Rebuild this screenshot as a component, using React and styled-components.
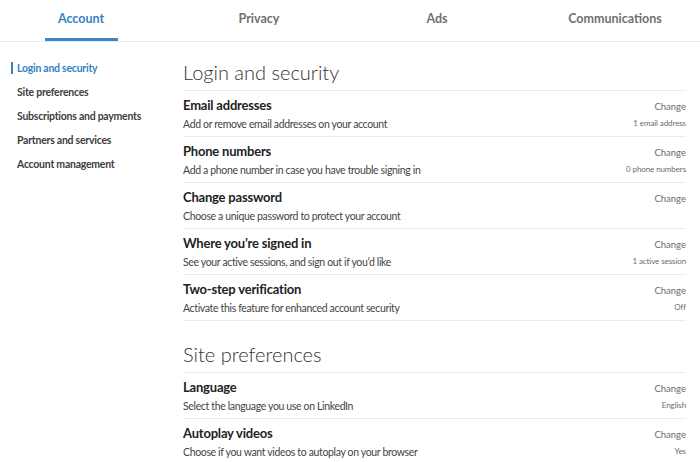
import React from "react";
import styled, { createGlobalStyle } from "styled-components";

const Global = createGlobalStyle`
  html, body { margin: 0; padding: 0; background: #fff; }
  body {
    font-family: Lato, "Open Sans", "Liberation Sans", sans-serif;
    color: #333;
    -webkit-font-smoothing: antialiased;
  }
  * { box-sizing: border-box; }
`;

const Page = styled.div`
  width: 700px;
  height: 462px;
  overflow: hidden;
  background: #fff;
`;

const TabBar = styled.nav`
  display: grid;
  grid-template-columns: repeat(4, 178px);
  margin-left: -8px;
  height: 42px;
  border-bottom: 1px solid #e9ebed;
`;

const Tab = styled.div`
  display: flex;
  flex-direction: column;
  align-items: center;
  height: 41px;
  padding-top: 10px;
  font-size: 12.5px;
  font-weight: 700;
  line-height: 17px;
  color: ${(p) => (p.$active ? "#3482c2" : "#707070")};
`;

const Indicator = styled.span`
  margin-top: auto;
  width: 73px;
  height: 3px;
  background: ${(p) => (p.$active ? "#3a86c6" : "transparent")};
`;

const Body = styled.div`
  display: flex;
`;

const Sidebar = styled.aside`
  width: 183px;
  flex: none;
  padding: 14px 0 0 11px;
  display: flex;
  flex-direction: column;
`;

const SideLink = styled.div`
  height: 24px;
  display: flex;
  align-items: center;
  font-size: 10.5px;
  font-weight: 700;
  letter-spacing: -0.25px;
  color: ${(p) => (p.$active ? "#3482c2" : "#3d3d3d")};
`;

const SideMarker = styled.span`
  width: 2px;
  height: 12px;
  margin-right: 4px;
  background: ${(p) => (p.$active ? "#3482c2" : "transparent")};
`;

const Main = styled.main`
  flex: 1;
  padding: 16px 14px 0 0;
  display: flex;
  flex-direction: column;
  gap: 19px;
`;

const Section = styled.section`
  display: flex;
  flex-direction: column;
`;

const SectionTitle = styled.h2`
  margin: 0;
  height: 33px;
  padding-bottom: 5px;
  font-size: 20px;
  line-height: 28px;
  font-weight: 300;
  color: #333;
  border-bottom: 1px solid #e9ebed;
`;

const Row = styled.div`
  height: 46px;
  display: flex;
  justify-content: space-between;
  border-bottom: 1px solid #e9ebed;
  padding-top: 6px;
`;

const RowText = styled.div`
  display: flex;
  flex-direction: column;
`;

const RowTitle = styled.div`
  font-size: 13px;
  line-height: 17px;
  font-weight: 700;
  letter-spacing: -0.2px;
  color: #222;
`;

const RowDesc = styled.div`
  margin-top: 2px;
  font-size: 10.5px;
  line-height: 17px;
  letter-spacing: -0.35px;
  color: #444;
`;

const RowMeta = styled.div`
  display: flex;
  flex-direction: column;
  align-items: flex-end;
  padding-top: 3px;
`;

const ChangeLink = styled.span`
  font-size: 9.5px;
  line-height: 14px;
  color: #6b6b6b;
`;

const MetaValue = styled.span`
  margin-top: 3px;
  font-size: 8px;
  line-height: 12px;
  letter-spacing: -0.1px;
  color: #6b6b6b;
`;

const tabs = ["Account", "Privacy", "Ads", "Communications"];

const sideLinks = [
  "Login and security",
  "Site preferences",
  "Subscriptions and payments",
  "Partners and services",
  "Account management",
];

const sections = [
  {
    title: "Login and security",
    rows: [
      { title: "Email addresses", desc: "Add or remove email addresses on your account", value: "1 email address" },
      { title: "Phone numbers", desc: "Add a phone number in case you have trouble signing in", value: "0 phone numbers" },
      { title: "Change password", desc: "Choose a unique password to protect your account", value: "" },
      { title: "Where you’re signed in", desc: "See your active sessions, and sign out if you’d like", value: "1 active session" },
      { title: "Two-step verification", desc: "Activate this feature for enhanced account security", value: "Off" },
    ],
  },
  {
    title: "Site preferences",
    rows: [
      { title: "Language", desc: "Select the language you use on LinkedIn", value: "English" },
      { title: "Autoplay videos", desc: "Choose if you want videos to autoplay on your browser", value: "Yes" },
    ],
  },
];

export default function App() {
  return (
    <Page>
      <Global />
      <TabBar>
        {tabs.map((t, i) => (
          <Tab key={t} $active={i === 0}>
            {t}
            <Indicator $active={i === 0} />
          </Tab>
        ))}
      </TabBar>
      <Body>
        <Sidebar>
          {sideLinks.map((l, i) => (
            <SideLink key={l} $active={i === 0}>
              <SideMarker $active={i === 0} />
              {l}
            </SideLink>
          ))}
        </Sidebar>
        <Main>
          {sections.map((s) => (
            <Section key={s.title}>
              <SectionTitle>{s.title}</SectionTitle>
              {s.rows.map((r) => (
                <Row key={r.title}>
                  <RowText>
                    <RowTitle>{r.title}</RowTitle>
                    <RowDesc>{r.desc}</RowDesc>
                  </RowText>
                  <RowMeta>
                    <ChangeLink>Change</ChangeLink>
                    {r.value && <MetaValue>{r.value}</MetaValue>}
                  </RowMeta>
                </Row>
              ))}
            </Section>
          ))}
        </Main>
      </Body>
    </Page>
  );
}
